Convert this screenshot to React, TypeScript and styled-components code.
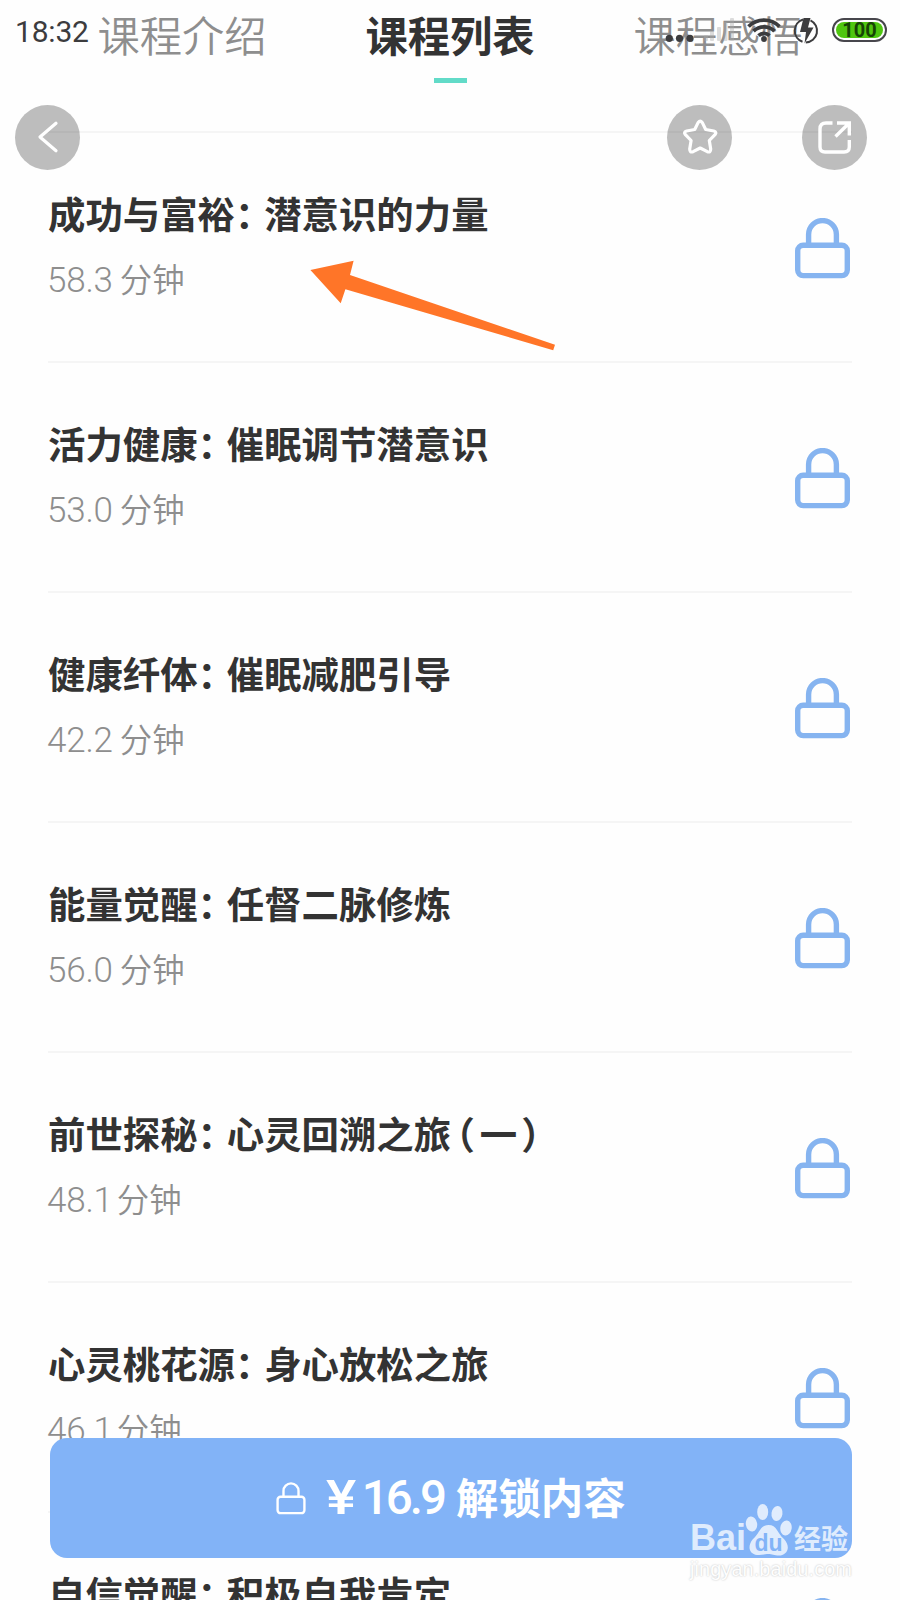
import React from "react";
import styled, { createGlobalStyle } from "styled-components";

const GlobalStyle = createGlobalStyle`
  * { box-sizing: border-box; }
  html, body { margin: 0; padding: 0; background: #fefefe; }
  body { font-family: "Noto Sans CJK SC", "Noto Sans", sans-serif; overflow: hidden; }
`;

const Screen = styled.div`
  position: relative;
  width: 900px;
  height: 1600px;
  overflow: hidden;
  background: #fefefe;
  color: #333;
`;

const Tabs = styled.nav`
  display: grid;
  grid-template-columns: repeat(3, 268px);
  justify-content: center;
  height: 131px;
`;

const Tab = styled.div<{ $active?: boolean }>`
  display: flex;
  flex-direction: column;
  align-items: center;
  padding-top: 3px;
  font-size: 42.3px;
  line-height: 62px;
  font-weight: ${(p) => (p.$active ? 600 : 350)};
  color: ${(p) => (p.$active ? "#333" : "#8e8e8e")};
  white-space: nowrap;
`;

const Indicator = styled.i`
  width: 33px;
  height: 5px;
  margin-top: 13px;
  background: #62dbc8;
`;

const StatusBar = styled.header`
  position: absolute;
  z-index: 3;
  top: 0;
  left: 0;
  width: 900px;
  height: 60px;
  display: flex;
  justify-content: space-between;
  padding: 0 13px 0 15px;
  color: #3c3c3e;
`;

const Clock = styled.time`
  font: 400 30px/63px Roboto, sans-serif;
  letter-spacing: -0.2px;
`;

const StatusIcons = styled.div`
  display: flex;
  align-items: center;
  height: 60px;
`;

const Battery = styled.div`
  display: flex;
  width: 55px;
  height: 24px;
  margin-left: 12px;
  padding: 2px;
  border: 2px solid #47464c;
  border-radius: 12px;
`;

const Charge = styled.span`
  flex: 1;
  border-radius: 9px;
  background: #4fc60f;
  color: #164405;
  font: 700 20px/17px Roboto, sans-serif;
  text-align: center;
`;

const RoundButton = styled.button<{ $x: number }>`
  position: absolute;
  z-index: 2;
  top: 105px;
  left: ${(p) => p.$x}px;
  width: 65px;
  height: 65px;
  padding: 0;
  border: 0;
  border-radius: 50%;
  background: rgba(0, 0, 0, 0.255);
  svg { display: block; }
`;

const List = styled.ul`
  list-style: none;
  margin: 0 48px;
  padding: 0;
`;

const Row = styled.li`
  display: flex;
  justify-content: space-between;
  height: 230px;
  padding: 52px 2px 0 0;
  border-top: 2px solid #f5f5f5;
  svg { margin: 33px 0 0; }
`;

const Title = styled.h2`
  margin: 0;
  font-size: 37.4px;
  line-height: 56px;
  font-weight: 600;
  color: #333;
  white-space: nowrap;
`;

const Punct = styled.span<{ $before?: number; $after?: number }>`
  font-feature-settings: "halt";
  margin-left: ${(p) => p.$before ?? 0}px;
  margin-right: ${(p) => p.$after ?? 0}px;
`;

const Duration = styled.p<{ $tight?: boolean }>`
  display: flex;
  align-items: baseline;
  gap: ${(p) => (p.$tight ? 4 : 7)}px;
  margin: 13px 0 0 -1px;
  font-size: 32.4px;
  line-height: 48px;
  font-weight: 350;
  color: #8e8e8e;
`;

const Minutes = styled.span`
  font: 300 35px/48px Roboto, sans-serif;
  letter-spacing: -0.2px;
`;

const Unlock = styled.button`
  position: absolute;
  z-index: 2;
  left: 50px;
  top: 1437.5px;
  width: 802.4px;
  height: 120px;
  display: flex;
  align-items: center;
  padding: 0 0 3px 226px;
  border: 0;
  border-radius: 17px;
  background: #82b3f7;
  color: #fff;
  font: 600 42.4px/60px "Noto Sans CJK SC", sans-serif;
  white-space: nowrap;
  svg { margin-top: 5px; }
`;

const Price = styled.span`
  display: flex;
  justify-content: space-between;
  width: 118px;
  margin: 4px 12px 0 20px;
  font: 500 47.5px/60px Roboto, sans-serif;
  letter-spacing: -3px;
`;

const Yen = styled.span`
  transform: scaleX(1.2);
  transform-origin: left center;
`;

const Arrow = styled.svg`
  position: absolute;
  z-index: 2;
  left: 310px;
  top: 260px;
`;

const Watermark = styled.div`
  position: absolute;
  z-index: 4;
  left: 690px;
  top: 1503px;
  width: 164px;
  color: rgba(255, 255, 255, 0.75);
`;

const Brand = styled.div`
  display: flex;
  align-items: flex-end;
  height: 53px;
  font: 700 36px/36px "Liberation Sans", sans-serif;
  svg { flex: none; margin-left: -1px; }
`;

const BrandCn = styled.span`
  margin-left: 2px;
  font: 700 27px/36px "Noto Sans CJK SC", sans-serif;
`;

const Url = styled.div`
  font: 400 20px/24px "Liberation Sans", sans-serif;
  letter-spacing: 0.05px;
  margin-top: 1px;
  color: #fefefe;
  text-shadow: 0 0 2px #bbb;
`;

const LockIcon = ({ small = false }: { small?: boolean }) => (
  <svg width={small ? 30 : 55} height={small ? 33 : 61} viewBox="0 0 55 61" fill="none"
    stroke={small ? "#fff" : "#86b4f0"} strokeWidth={small ? 4.4 : 5.4}>
    <rect x="2.7" y="27.2" width="49.6" height="30.4" rx="5.5" />
    <path d="M13.6 27V16.5a13.9 13.9 0 0 1 27.8 0V27" />
  </svg>
);

const courses = [
  ["成功与富裕", "潜意识的力量", "58.3"],
  ["活力健康", "催眠调节潜意识", "53.0"],
  ["健康纤体", "催眠减肥引导", "42.2"],
  ["能量觉醒", "任督二脉修炼", "56.0"],
  ["前世探秘", "心灵回溯之旅", "48.1", "一"],
  ["心灵桃花源", "身心放松之旅", "46.1"],
  ["自信觉醒", "积极自我肯定", "45.0"],
];

export default function App() {
  return (
    <Screen>
      <GlobalStyle />
      <StatusBar>
        <Clock>18:32</Clock>
        <StatusIcons>
          <svg width="155" height="60" viewBox="665 0 155 60" fill="#3c3c3e">
            <circle cx="669.3" cy="38.3" r="3.6" />
            <circle cx="679.5" cy="38.3" r="3.6" />
            <circle cx="690" cy="38.3" r="3.6" />
            <g fill="#aaa" opacity=".4">
              <rect x="704" y="35" width="4" height="6" rx="1" />
              <rect x="710" y="31" width="4" height="10" rx="1" />
              <rect x="717" y="27" width="4" height="14" rx="1" />
              <rect x="723.5" y="22" width="4" height="19" rx="1" />
              <rect x="730" y="18" width="4" height="23" rx="1" />
            </g>
            <circle cx="764" cy="39" r="2.9" />
            <g fill="none" stroke="#3c3c3e" strokeWidth="3.8">
              <path d="M748.5 26.5a22 22 0 0 1 31 0" />
              <path d="M753.5 31.2a15 15 0 0 1 21 0" />
              <path d="M758.5 35.6a8 8 0 0 1 11 0" />
            </g>
            <g fill="none" stroke="#3c3c3e" strokeWidth="2">
              <path d="M803 19.5a11.7 11.7 0 0 0-.5 22.2" />
              <path d="M810.5 20.3a11.7 11.7 0 0 1-4.7 22.2" />
            </g>
            <path d="M803.5 18h7l-2.5 9.5h5.5L804.500 43.500l1.500-11.500h-6z" />
          </svg>
          <Battery><Charge>100</Charge></Battery>
        </StatusIcons>
      </StatusBar>
      <Tabs>
        <Tab>课程介绍</Tab>
        <Tab $active>课程列表<Indicator /></Tab>
        <Tab>课程感悟</Tab>
      </Tabs>
      <RoundButton $x={15} aria-label="返回">
        <svg width="65" height="65" fill="none" stroke="#fff" strokeWidth="3.2" strokeLinecap="round" strokeLinejoin="round">
          <path d="M41 18.200L25 32l16 13.700" />
        </svg>
      </RoundButton>
      <RoundButton $x={667.4} aria-label="收藏">
        <svg width="65" height="65" fill="none" stroke="#fff" strokeWidth="3.2" strokeLinejoin="round">
          <path d="M31.200 17.400Q33.200 14.800 35.200 17.400L38.700 24.500L46.800 26Q50.200 27 48 29.600L42.300 35.500L43.700 44Q43.700 48 40.300 46.700L33.200 43L26.100 46.700Q22.700 48 22.700 44L24.100 35.500L18.400 29.600Q16.200 27 19.600 26L27.700 24.500Z" />
        </svg>
      </RoundButton>
      <RoundButton $x={802.4} aria-label="分享">
        <svg width="65" height="65" fill="none" stroke="#fff" strokeWidth="3.4">
          <path d="M30.500 18H24q-6 0-6 6v18q0 5 5 5h19q5.300 0 5.300-5v-7M35 18h12.300v12.500M47 18.300L33.500 31.500" />
        </svg>
      </RoundButton>
      <List>
        {courses.map(([name, sub, minutes, part]) => (
          <Row key={name}>
            <div>
              <Title>
                {name}<Punct $after={10.5}>：</Punct>{sub}
                {part && <><Punct $before={5} $after={5}>（</Punct>{part}<Punct $before={4}>）</Punct></>}
              </Title>
              <Duration $tight={minutes.endsWith("1")}><Minutes>{minutes}</Minutes>分钟</Duration>
            </div>
            <LockIcon />
          </Row>
        ))}
      </List>
      <Arrow width="246" height="91" viewBox="310 260 246 91">
        <path d="M310.400 270L353.600 260.700L350 275L555 344.700L553.200 350.200L345.400 289.300L340.700 303.300Z" fill="#ff7528" />
      </Arrow>
      <Unlock>
        <LockIcon small />
        <Price><Yen>¥</Yen><span>16.9</span></Price>
        <span>解锁内容</span>
      </Unlock>
      <Watermark>
        <Brand>
          <span>Bai</span>
          <svg width="47" height="53" viewBox="0 0 47 53" fill="currentColor">
            <ellipse cx="6.500" cy="21" rx="5.700" ry="7.500" transform="rotate(-8 6.500 21)" />
            <ellipse cx="17.700" cy="9" rx="5.500" ry="8" />
            <ellipse cx="32" cy="10.500" rx="5.500" ry="7.500" transform="rotate(8 32 10.500)" />
            <ellipse cx="41" cy="25" rx="5.700" ry="7.500" transform="rotate(8 41 25)" />
            <path d="M23.500 22C32 22 32 30 39 36C47 45 41 52.500 34 52.500C29 52.500 27 51 23.500 51C20 51 17 52.500 12 52C4 51 2 43 8 36C15 30 15 22 23.500 22Z" />
            <text x="23.500" y="48" textAnchor="middle" fontFamily="Liberation Sans" fontWeight="700" fontSize="23" fill="#82b3f7">du</text>
          </svg>
          <BrandCn>经验</BrandCn>
        </Brand>
        <Url>jingyan.baidu.com</Url>
      </Watermark>
    </Screen>
  );
}
